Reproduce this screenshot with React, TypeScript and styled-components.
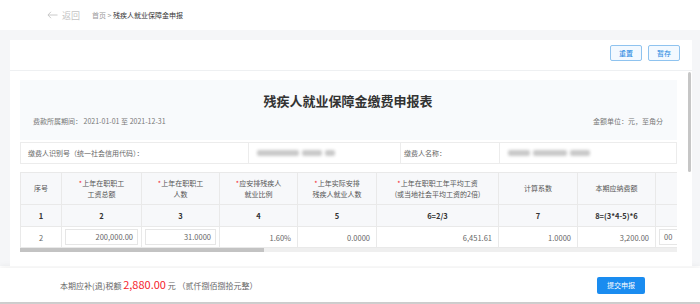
import React from 'react';
import styled, { createGlobalStyle } from 'styled-components';

const GlobalStyle = createGlobalStyle`
  html, body {
    margin: 0;
    padding: 0;
    width: 700px;
    height: 304px;
    overflow: hidden;
    background: #ffffff;
    font-family: "Noto Sans CJK SC", "Noto Sans", sans-serif;
    color: #333;
  }
  * {
    box-sizing: border-box;
  }
`;

const Page = styled.div`
  display: flex;
  flex-direction: column;
  width: 700px;
  height: 304px;
  border-bottom: 2px solid #cfcfcf;
`;

const TopBar = styled.div`
  display: flex;
  align-items: center;
  height: 30px;
  padding-left: 47px;
  background: #fff;
  flex-shrink: 0;
`;

const BackLink = styled.span`
  display: flex;
  align-items: center;
  gap: 4px;
  font-size: 9px;
  color: #c4c4c4;
  margin-right: 12px;
`;

const Crumbs = styled.span`
  font-size: 7px;
  color: #999;

  b {
    font-weight: normal;
    color: #333;
  }
`;

const Main = styled.div`
  flex: 1;
  min-height: 0;
  background: #f5f6f8;
  padding: 10px 8px 0 10px;
  display: flex;
  flex-direction: column;
`;

const Card = styled.div`
  position: relative;
  flex: 1;
  min-height: 0;
  width: 682px;
  overflow: hidden;
  background: #fff;
  display: flex;
  flex-direction: column;
`;

const CardHead = styled.div`
  display: flex;
  justify-content: flex-end;
  align-items: center;
  gap: 6px;
  height: 31px;
  padding: 0 12px 4px 0;
  border-bottom: 1px solid #eef0f2;
  flex-shrink: 0;
`;

const GhostButton = styled.button`
  width: 32px;
  height: 16px;
  padding: 0;
  border: 1px solid #8fc3ef;
  border-radius: 2px;
  background: #f3f9ff;
  color: #1a86e0;
  font-family: inherit;
  font-size: 7px;
  line-height: 14px;
`;

const Scroller = styled.div`
  flex: 1;
  min-height: 0;
  width: 682px;
  overflow: hidden;
  padding: 9px 15px 0 10px;
`;

/* overlay thumb of the vertical scrollbar */
const VThumb = styled.div`
  position: absolute;
  right: 1px;
  top: 32px;
  width: 3px;
  height: 100px;
  border-radius: 2px;
  background: #c6c6c6;
`;

const Banner = styled.div`
  height: 60px;
  background: #f8fafc;
  padding: 12px 14px 0 13px;
`;

const Title = styled.h1`
  margin: 0;
  text-align: center;
  font-size: 13px;
  line-height: 18px;
  font-weight: bold;
  color: #333;
`;

const MetaRow = styled.div`
  display: flex;
  justify-content: space-between;
  margin-top: 5px;
  font-size: 7px;
  line-height: 12px;
  color: #777;
`;

const InfoGrid = styled.div`
  display: grid;
  grid-template-columns: 227px 152px 99px 179px;
  width: 657px;
  height: 22px;
  margin-top: 2px;
  border: 1px solid #ececec;
`;

const InfoCell = styled.div<{ $pad: number }>`
  display: flex;
  align-items: center;
  padding-left: ${(p) => p.$pad}px;
  font-size: 7px;
  color: #666;
  border-left: 1px solid #ececec;

  &:first-child {
    border-left: none;
  }
`;

const Blurred = styled.div`
  display: flex;
  gap: 3px;
  filter: blur(1.6px);
`;

const BlurBit = styled.span<{ $w: number }>`
  display: block;
  width: ${(p) => p.$w}px;
  height: 6px;
  background: #c9c9c9;
  border-radius: 2px;
`;

const TableWrap = styled.div`
  width: 657px;
  margin-top: 8px;
  overflow: hidden;
`;

const HTrack = styled.div`
  width: 657px;
  height: 4px;
  background: #efefef;
`;

const HThumb = styled.div`
  width: 244px;
  height: 4px;
  background: #c3c3c3;
`;

const Table = styled.table`
  border-collapse: collapse;
  table-layout: fixed;
  width: 1770px;
  font-size: 7px;
`;

const Th = styled.th`
  height: 32px;
  background: #f7f8fa;
  border: 1px solid #e9e9e9;
  font-weight: normal;
  color: #555;
  line-height: 11px;
  text-align: center;
  padding: 0 2px;
`;

const Star = styled.span`
  color: #f5222d;
`;

const IndexCell = styled.td`
  height: 22px;
  background: #f7f8fa;
  border: 1px solid #e9e9e9;
  text-align: center;
  font-weight: bold;
  font-size: 7.5px;
  color: #333;
`;

const DataCell = styled.td<{ $center?: boolean }>`
  height: 20px;
  border: 1px solid #e9e9e9;
  text-align: ${(p) => (p.$center ? 'center' : 'right')};
  padding: 0 6px;
  color: #666;
  font-size: 7.5px;
`;

const InputCell = styled.td`
  height: 20px;
  border: 1px solid #e9e9e9;
  padding: 2px 3px;
`;

const FieldBox = styled.div<{ $align: 'left' | 'right' }>`
  height: 16px;
  border: 1px solid #e6e6e6;
  text-align: ${(p) => p.$align};
  padding: 0 4px;
  line-height: 14px;
  color: #666;
  font-size: 7.5px;
`;

const Footer = styled.div`
  height: 34px;
  margin-top: 2px;
  flex-shrink: 0;
  display: flex;
  align-items: center;
  justify-content: space-between;
  padding: 0 55px 0 60px;
  background: #fff;
  box-shadow: 0 -2px 6px rgba(0, 0, 0, 0.06);
`;

const Summary = styled.div`
  font-size: 8px;
  line-height: 14px;
  color: #666;
  white-space: pre;
`;

const Amount = styled.span`
  font-size: 11px;
  color: #f5222d;
`;

const PrimaryButton = styled.button`
  width: 48px;
  height: 17px;
  padding: 0;
  border: none;
  border-radius: 2px;
  background: #1a8cf0;
  color: #fff;
  font-family: inherit;
  font-size: 7px;
`;

type Column = {
  title: React.ReactNode;
  width: number;
  required?: boolean;
  index: string;
  value: string;
  input?: 'left' | 'right';
};

const columns: Column[] = [
  { title: '序号', width: 41, index: '1', value: '2' },
  { title: <>上年在职职工<br />工资总额</>, width: 80, required: true, index: '2', value: '200,000.00', input: 'right' },
  { title: <>上年在职职工<br />人数</>, width: 78, required: true, index: '3', value: '31.0000', input: 'right' },
  { title: <>应安排残疾人<br />就业比例</>, width: 78, required: true, index: '4', value: '1.60%' },
  { title: <>上年实际安排<br />残疾人就业人数</>, width: 79, required: true, index: '5', value: '0.0000' },
  { title: <>上年在职职工年平均工资<br />(或当地社会平均工资的2倍)</>, width: 122, required: true, index: '6=2/3', value: '6,451.61' },
  { title: '计算系数', width: 79, index: '7', value: '1.0000' },
  { title: '本期应纳费额', width: 78, index: '8=(3*4-5)*6', value: '3,200.00' },
  { title: '本期减免费额', width: 160, index: '9', value: '00', input: 'left' },
  { title: '本期已缴费额', width: 160, index: '10', value: '320.00' },
  { title: '本期应补(退)费额', width: 170, index: '11=8-9-10', value: '2,880.00' },
  { title: '减免性质代码', width: 200, index: '12', value: '', input: 'left' },
  { title: '备注', width: 445, index: '13', value: '', input: 'left' },
];

const BackArrow = () => (
  <svg width="11" height="8" viewBox="0 0 11 8" fill="none">
    <path d="M10.5 4H1M4 0.8L0.9 4L4 7.2" stroke="#c4c4c4" strokeWidth="0.9" />
  </svg>
);

export default function App() {
  return (
    <Page>
      <GlobalStyle />
      <TopBar>
        <BackLink>
          <BackArrow />
          返回
        </BackLink>
        <Crumbs>
          首页 &gt; <b>残疾人就业保障金申报</b>
        </Crumbs>
      </TopBar>
      <Main>
        <Card>
          <CardHead>
            <GhostButton>重置</GhostButton>
            <GhostButton>暂存</GhostButton>
          </CardHead>
          <Scroller>
            <Banner>
              <Title>残疾人就业保障金缴费申报表</Title>
              <MetaRow>
                <span>费款所属期间：&nbsp;2021-01-01 至 2021-12-31</span>
                <span>金额单位：元，至角分</span>
              </MetaRow>
            </Banner>
            <InfoGrid>
              <InfoCell $pad={7}>缴费人识别号（统一社会信用代码）：</InfoCell>
              <InfoCell $pad={8}>
                <Blurred>
                  <BlurBit $w={42} />
                  <BlurBit $w={20} />
                  <BlurBit $w={10} />
                </Blurred>
              </InfoCell>
              <InfoCell $pad={3}>缴费人名称：</InfoCell>
              <InfoCell $pad={8}>
                <Blurred>
                  <BlurBit $w={22} />
                  <BlurBit $w={34} />
                  <BlurBit $w={20} />
                </Blurred>
              </InfoCell>
            </InfoGrid>
            <TableWrap>
              <Table>
                <colgroup>
                  {columns.map((c, i) => (
                    <col key={i} style={{ width: c.width }} />
                  ))}
                </colgroup>
                <thead>
                  <tr>
                    {columns.map((c, i) => (
                      <Th key={i}>
                        {c.required && <Star>*</Star>}
                        {c.title}
                      </Th>
                    ))}
                  </tr>
                </thead>
                <tbody>
                  <tr>
                    {columns.map((c, i) => (
                      <IndexCell key={i}>{c.index}</IndexCell>
                    ))}
                  </tr>
                  <tr>
                    {columns.map((c, i) =>
                      c.input ? (
                        <InputCell key={i}>
                          <FieldBox $align={c.input}>{c.value}</FieldBox>
                        </InputCell>
                      ) : (
                        <DataCell key={i} $center={i === 0}>
                          {c.value}
                        </DataCell>
                      ),
                    )}
                  </tr>
                </tbody>
              </Table>
            </TableWrap>
            <HTrack>
              <HThumb />
            </HTrack>
          </Scroller>
          <VThumb />
        </Card>
      </Main>
      <Footer>
        <Summary>
          本期应补(退)税额 <Amount>2,880.00</Amount> 元 （贰仟捌佰捌拾元整）
        </Summary>
        <PrimaryButton>提交申报</PrimaryButton>
      </Footer>
    </Page>
  );
}
